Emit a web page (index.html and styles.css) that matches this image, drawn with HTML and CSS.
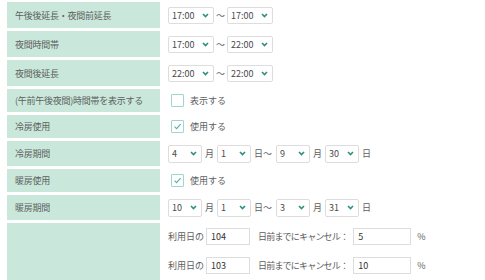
FILE: index.html
```html
<!DOCTYPE html>
<html lang="ja">
<head>
<meta charset="utf-8">
<link rel="stylesheet" href="styles.css">
</head>
<body>
<div class="form">
  <div class="row h-time">
    <div class="label">午後後延長・夜間前延長</div>
    <div class="value">
      <span class="sel sel-time"><span>17:00</span><svg class="chev" viewBox="0 0 7 5"><path d="M1 1 L3.5 3.6 L6 1"/></svg></span>
      <span class="tilde">～</span>
      <span class="sel sel-time"><span>17:00</span><svg class="chev" viewBox="0 0 7 5"><path d="M1 1 L3.5 3.6 L6 1"/></svg></span>
    </div>
  </div>
  <div class="row h-time">
    <div class="label">夜間時間帯</div>
    <div class="value">
      <span class="sel sel-time"><span>17:00</span><svg class="chev" viewBox="0 0 7 5"><path d="M1 1 L3.5 3.6 L6 1"/></svg></span>
      <span class="tilde">～</span>
      <span class="sel sel-time"><span>22:00</span><svg class="chev" viewBox="0 0 7 5"><path d="M1 1 L3.5 3.6 L6 1"/></svg></span>
    </div>
  </div>
  <div class="row h-time">
    <div class="label">夜間後延長</div>
    <div class="value">
      <span class="sel sel-time"><span>22:00</span><svg class="chev" viewBox="0 0 7 5"><path d="M1 1 L3.5 3.6 L6 1"/></svg></span>
      <span class="tilde">～</span>
      <span class="sel sel-time"><span>22:00</span><svg class="chev" viewBox="0 0 7 5"><path d="M1 1 L3.5 3.6 L6 1"/></svg></span>
    </div>
  </div>
  <div class="row h-check">
    <div class="label">(午前午後夜間)時間帯を表示する</div>
    <div class="value">
      <span class="check"></span><span>表示する</span>
    </div>
  </div>
  <div class="row h-check">
    <div class="label">冷房使用</div>
    <div class="value">
      <span class="check"><svg class="tick" viewBox="0 0 11 11"><path d="M2.5 5.6 L4.6 7.6 L8.6 3.2"/></svg></span><span>使用する</span>
    </div>
  </div>
  <div class="row h-month">
    <div class="label">冷房期間</div>
    <div class="value">
      <span class="sel sel-month"><span>4</span><svg class="chev" viewBox="0 0 7 5"><path d="M1 1 L3.5 3.6 L6 1"/></svg></span>
      <span class="unit">月</span>
      <span class="sel sel-month"><span>1</span><svg class="chev" viewBox="0 0 7 5"><path d="M1 1 L3.5 3.6 L6 1"/></svg></span>
      <span class="unit unit-day">日</span><span class="wave">～</span>
      <span class="sel sel-month"><span>9</span><svg class="chev" viewBox="0 0 7 5"><path d="M1 1 L3.5 3.6 L6 1"/></svg></span>
      <span class="unit">月</span>
      <span class="sel sel-month"><span>30</span><svg class="chev" viewBox="0 0 7 5"><path d="M1 1 L3.5 3.6 L6 1"/></svg></span>
      <span class="unit">日</span>
    </div>
  </div>
  <div class="row h-check">
    <div class="label">暖房使用</div>
    <div class="value">
      <span class="check"><svg class="tick" viewBox="0 0 11 11"><path d="M2.5 5.6 L4.6 7.6 L8.6 3.2"/></svg></span><span>使用する</span>
    </div>
  </div>
  <div class="row h-month">
    <div class="label">暖房期間</div>
    <div class="value">
      <span class="sel sel-month"><span>10</span><svg class="chev" viewBox="0 0 7 5"><path d="M1 1 L3.5 3.6 L6 1"/></svg></span>
      <span class="unit">月</span>
      <span class="sel sel-month"><span>1</span><svg class="chev" viewBox="0 0 7 5"><path d="M1 1 L3.5 3.6 L6 1"/></svg></span>
      <span class="unit unit-day">日</span><span class="wave">～</span>
      <span class="sel sel-month"><span>3</span><svg class="chev" viewBox="0 0 7 5"><path d="M1 1 L3.5 3.6 L6 1"/></svg></span>
      <span class="unit">月</span>
      <span class="sel sel-month"><span>31</span><svg class="chev" viewBox="0 0 7 5"><path d="M1 1 L3.5 3.6 L6 1"/></svg></span>
      <span class="unit">日</span>
    </div>
  </div>
  <div class="row h-cancel">
    <div class="label"></div>
    <div class="value cancel">
      <div class="line">
        <span>利用日の</span><span class="input in-days">104</span><span class="before">日前までにキャンセル：</span><span class="input in-rate">5</span><span class="pct">%</span>
      </div>
      <div class="line">
        <span>利用日の</span><span class="input in-days">103</span><span class="before">日前までにキャンセル：</span><span class="input in-rate">10</span><span class="pct">%</span>
      </div>
    </div>
  </div>
</div>
</body>
</html>
```
FILE: styles.css
```css
body {
  margin: 0;
  background: #ffffff;
  font-family: "Noto Sans CJK JP", sans-serif;
  font-size: 9px;
  color: #5e5e5e;
}

.form {
  display: flex;
  flex-direction: column;
  gap: 3px;
  padding: 2px 0 0 7px;
}

.row {
  display: grid;
  grid-template-columns: 153px 1fr;
}

.h-time { height: 26px; }
.h-check { height: 23px; }
.h-month { height: 25px; }
.h-cancel { height: 57px; }

.label {
  background: #c9e8db;
  display: flex;
  align-items: center;
  padding-left: 8px;
  color: #5e5e5e;
  letter-spacing: -0.25px;
}

.value {
  display: flex;
  align-items: center;
  padding-left: 8px;
}

.sel {
  display: inline-flex;
  align-items: center;
  justify-content: space-between;
  box-sizing: border-box;
  height: 17px;
  border: 1px solid #dddddd;
  border-radius: 2px;
  background: #ffffff;
  padding: 0 4px 0 3px;
  color: #4a4a4a;
}

.sel-time { width: 46px; }
.sel-month { width: 34px; height: 18px; }

.chev {
  width: 7px;
  height: 5px;
  fill: none;
  stroke: #2f8f7f;
  stroke-width: 1.6;
}

.tilde { margin: 0 2px; }
.unit { margin: 0 3px; }
.unit-day { margin-right: 0; }
.wave { margin-right: 4px; }

.check {
  display: inline-flex;
  align-items: center;
  justify-content: center;
  box-sizing: border-box;
  width: 13px;
  height: 13px;
  border: 1px solid #9fd5ce;
  border-radius: 1px;
  background: #ffffff;
  margin-left: 3px;
  margin-right: 6px;
}

.tick {
  width: 11px;
  height: 11px;
  fill: none;
  stroke: #55b2a6;
  stroke-width: 1.1;
}

.cancel {
  flex-direction: column;
  align-items: flex-start;
  justify-content: flex-start;
  padding-top: 5px;
  gap: 12px;
}

.line {
  display: flex;
  align-items: center;
}

.input {
  display: inline-flex;
  align-items: center;
  box-sizing: border-box;
  height: 17px;
  border: 1px solid #dddddd;
  background: #ffffff;
  padding-left: 4px;
  color: #333333;
}

.in-days { width: 44px; margin-left: 2px; }
.in-rate { width: 58px; margin-left: 5px; }
.before { margin-left: 8px; letter-spacing: -0.8px; }
.pct { margin-left: 6px; }
```
